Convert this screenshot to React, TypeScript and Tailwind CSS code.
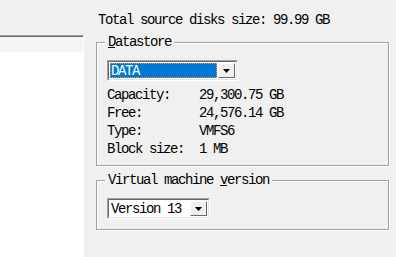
import React from 'react';

const font = { fontFamily: '"Liberation Mono", "Noto Sans CJK SC", monospace' };

function Combo({ value, width, selected }: { value: string; width: string; selected?: boolean }) {
  return (
    <div className={`${width} h-[21px] flex border-t border-l border-[#a0a0a0] border-r border-b border-r-white border-b-white`}>
      <div className="flex-1 flex border-t border-l border-[#696969] border-r border-b border-r-[#e3e3e3] border-b-[#e3e3e3] bg-white p-[1px]">
        <div
          className={`flex-1 flex items-center pl-[1px] leading-none ${
            selected ? 'bg-[#0078d7] text-white outline-1 outline-dotted outline-[#f59b2a] -outline-offset-1' : 'text-black'
          }`}
        >
          {value}
        </div>
        <div className="w-[17px] ml-[1px] flex items-center justify-center bg-[#f0f0f0] border-t border-l border-white border-r border-b border-r-[#696969] border-b-[#696969]">
          <svg width="7" height="4" viewBox="0 0 7 4">
            <path d="M0 0h7L3.5 4z" fill="#000" />
          </svg>
        </div>
      </div>
    </div>
  );
}

function Group({ label, children, className }: { label: React.ReactNode; children: React.ReactNode; className: string }) {
  return (
    <div className={`relative border border-[#a0a0a0] shadow-[inset_1px_1px_0_#fff,1px_1px_0_#fff] ${className}`}>
      <span className="absolute -top-[9px] left-[8px] px-[3px] bg-[#f0f0f0] leading-[16px]">{label}</span>
      {children}
    </div>
  );
}

export default function App() {
  const rows = [
    ['Capacity:', '29,300.75 GB'],
    ['Free:', '24,576.14 GB'],
    ['Type:', 'VMFS6'],
    ['Block size:', '1 MB'],
  ];

  return (
    <div className="w-[396px] h-[257px] bg-[#f0f0f0] flex text-[14px] tracking-[-1.4px] text-black overflow-hidden" style={font}>
      {/* Left list panel */}
      <div className="w-[84px] pt-[35px] flex flex-col">
        <div className="flex-1 flex flex-col border-t border-[#a0a0a0] border-r border-r-white">
          <div className="flex-1 flex flex-col border-t border-[#696969]">
            <div className="h-[15px] bg-[#f4f4f4]" />
            <div className="flex-1 bg-white" />
          </div>
        </div>
      </div>

      {/* Right details */}
      <div className="flex-1 pl-[12px] pr-[7px] flex flex-col">
        <div className="mt-[12px] h-[16px] leading-[16px] pl-[2px]">Total source disks size: 99.99 GB</div>

        <Group
          className="mt-[14px] h-[124px] pt-[17px] pl-[10px]"
          label={<><span className="underline">D</span>atastore</>}
        >
          <Combo value="DATA" width="w-[131px]" selected />
          <div className="mt-[5px] flex flex-col">
            {rows.map(([k, v]) => (
              <div key={k} className="flex h-[18px] items-center">
                <span className="w-[92px]">{k}</span>
                <span>{v}</span>
              </div>
            ))}
          </div>
        </Group>

        <Group
          className="mt-[14px] h-[50px] pt-[17px] pl-[10px]"
          label={<>Virtual machine <span className="underline">v</span>ersion</>}
        >
          <Combo value="Version 13" width="w-[103px]" />
        </Group>
      </div>
    </div>
  );
}
